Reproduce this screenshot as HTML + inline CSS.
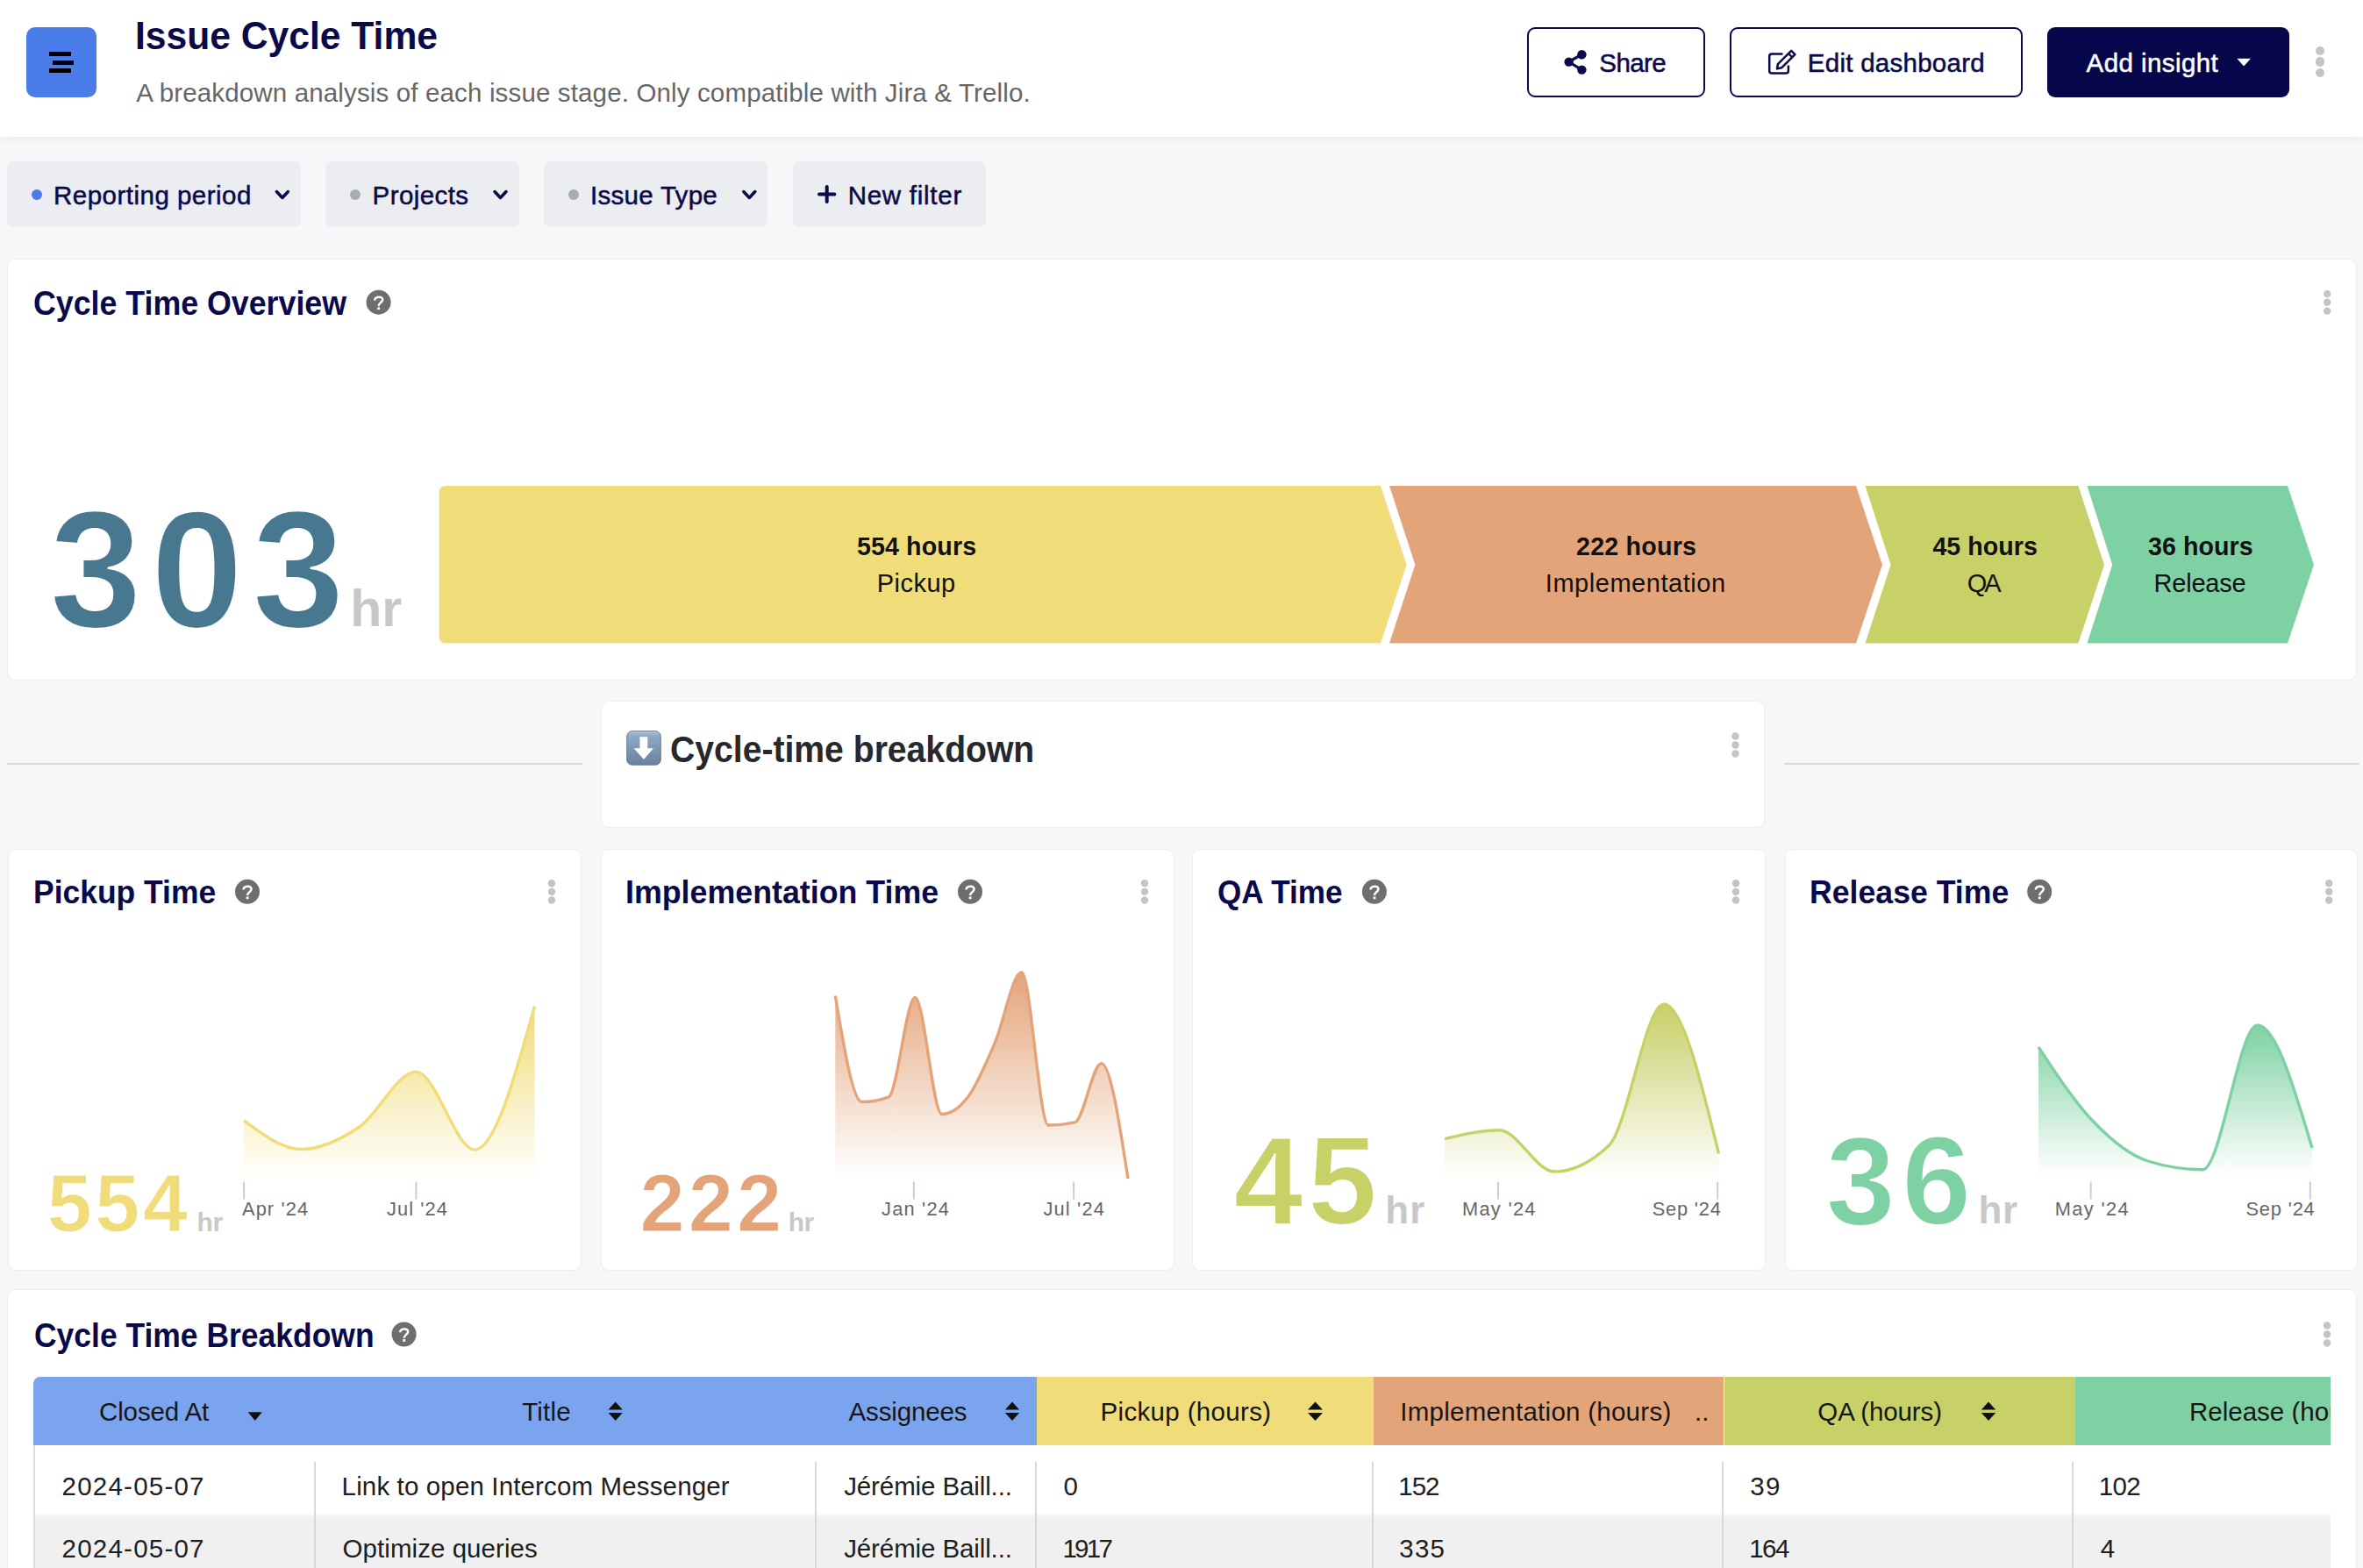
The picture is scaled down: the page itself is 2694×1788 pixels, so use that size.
<!DOCTYPE html>
<html><head><meta charset="utf-8"><title>Issue Cycle Time</title>
<style>
html,body{margin:0;padding:0}
body{width:2694px;height:1788px;overflow:hidden;background:#f6f7f9;position:relative;font-family:"Liberation Sans",sans-serif}
.a{position:absolute;box-sizing:border-box}
.t{position:absolute;white-space:nowrap;line-height:1}
.card{position:absolute;background:#fff;border-radius:8px;box-shadow:0 0 0 1px #eceef0,0 1px 3px rgba(0,0,0,.03)}
.dot{position:absolute;border-radius:50%;background:#c4c4c4}
svg.ov{position:absolute;left:0;top:0}
</style></head><body>
<!-- header -->
<div class="a" style="left:0;top:0;width:2694px;height:156px;background:#fff;box-shadow:0 2px 10px rgba(0,0,0,.06)"></div>
<div class="a" style="left:30px;top:31px;width:80px;height:80px;background:#4a7de9;border-radius:10px"></div>
<div class="a" style="left:56px;top:59px;width:25px;height:5px;background:#000"></div>
<div class="a" style="left:60px;top:68.5px;width:24px;height:5px;background:#000"></div>
<div class="a" style="left:56px;top:78px;width:25px;height:5px;background:#000"></div>
<div class="a" style="left:1741px;top:31px;width:203px;height:80px;border:2.2px solid #0a0a4a;border-radius:9px;background:#fff"></div>
<div class="a" style="left:1972px;top:31px;width:334px;height:80px;border:2.2px solid #0a0a4a;border-radius:9px;background:#fff"></div>
<div class="a" style="left:2334px;top:31px;width:276px;height:80px;border-radius:9px;background:#06064a"></div>
<div class="dot" style="left:2640px;top:52.5px;width:10.4px;height:10.4px"></div>
<div class="dot" style="left:2640px;top:65.4px;width:10.4px;height:10.4px"></div>
<div class="dot" style="left:2640px;top:78.1px;width:10.4px;height:10.4px"></div>
<!-- filters -->
<div class="a" style="left:8.4px;top:184px;width:334.4px;height:75.4px;background:#ecedf0;border-radius:8px"></div>
<div class="a" style="left:371.3px;top:184px;width:220.4px;height:75.4px;background:#ecedf0;border-radius:8px"></div>
<div class="a" style="left:620.3px;top:184px;width:255.2px;height:75.4px;background:#ecedf0;border-radius:8px"></div>
<div class="a" style="left:904.2px;top:184px;width:220.2px;height:75.4px;background:#ecedf0;border-radius:8px"></div>
<div class="dot" style="left:35.9px;top:216px;width:12px;height:12px;background:#4a7de9"></div>
<div class="dot" style="left:399px;top:216px;width:12px;height:12px;background:#a9acb6"></div>
<div class="dot" style="left:647.8px;top:216px;width:12px;height:12px;background:#a9acb6"></div>
<!-- cards -->
<div class="card" style="left:9.3px;top:296px;width:2676.7px;height:479px"></div>
<div class="a" style="left:7.6px;top:870px;width:656.8px;height:2px;background:#d8d9db"></div>
<div class="a" style="left:2034px;top:870px;width:655.6px;height:2px;background:#d8d9db"></div>
<div class="card" style="left:685.6px;top:800px;width:1325.4px;height:143px"></div>
<div class="card" style="left:10px;top:968.6px;width:652px;height:479.4px"></div>
<div class="card" style="left:686px;top:968.6px;width:652px;height:479.4px"></div>
<div class="card" style="left:1360px;top:968.6px;width:652px;height:479.4px"></div>
<div class="card" style="left:2036px;top:968.6px;width:651px;height:479.4px"></div>
<div class="card" style="left:9.1px;top:1471px;width:2676.5px;height:400px"></div>
<!-- table -->
<div class="a" style="left:38.1px;top:1570px;width:1144px;height:78px;background:#7ba4ee;border-top-left-radius:8px"></div>
<div class="a" style="left:1182px;top:1570px;width:384.2px;height:78px;background:#f0dc78"></div>
<div class="a" style="left:1566.2px;top:1570px;width:399.3px;height:78px;background:#e4a47a"></div>
<div class="a" style="left:1965.5px;top:1570px;width:400.5px;height:78px;background:#c8d068"></div>
<div class="a" style="left:2366px;top:1570px;width:291.4px;height:78px;background:#7ed1a3"></div>
<div class="a" style="left:38.1px;top:1725.5px;width:2619.3px;height:63px;background:linear-gradient(#fbfbfb,#f0f0f0 6px)"></div>
<div class="a" style="left:38.1px;top:1648px;width:2px;height:140px;background:#dcdcdc"></div>
<div class="a" style="left:357.6px;top:1666.6px;width:2px;height:122px;background:#d9d9d9"></div>
<div class="a" style="left:928.7px;top:1666.6px;width:2px;height:122px;background:#d9d9d9"></div>
<div class="a" style="left:1179.8px;top:1666.6px;width:2px;height:122px;background:#d9d9d9"></div>
<div class="a" style="left:1564px;top:1666.6px;width:2px;height:122px;background:#d9d9d9"></div>
<div class="a" style="left:1963.2px;top:1666.6px;width:2px;height:122px;background:#d9d9d9"></div>
<div class="a" style="left:2362.4px;top:1666.6px;width:2px;height:122px;background:#d9d9d9"></div>

<svg class="ov" width="2694" height="1788" viewBox="0 0 2694 1788">
<defs>
<linearGradient id="g0" x1="0" y1="1147.2" x2="0" y2="1345" gradientUnits="userSpaceOnUse"><stop offset="0" stop-color="#f0dc78" stop-opacity="1.0"/><stop offset="1" stop-color="#f0dc78" stop-opacity="0"/></linearGradient>
<linearGradient id="g1" x1="0" y1="1108.8" x2="0" y2="1340" gradientUnits="userSpaceOnUse"><stop offset="0" stop-color="#e4a47a" stop-opacity="1.0"/><stop offset="1" stop-color="#e4a47a" stop-opacity="0"/></linearGradient>
<linearGradient id="g2" x1="0" y1="1145.0" x2="0" y2="1345" gradientUnits="userSpaceOnUse"><stop offset="0" stop-color="#c8d068" stop-opacity="1.0"/><stop offset="1" stop-color="#c8d068" stop-opacity="0"/></linearGradient>
<linearGradient id="g3" x1="0" y1="1169.0" x2="0" y2="1340" gradientUnits="userSpaceOnUse"><stop offset="0" stop-color="#7ed1a3" stop-opacity="1.0"/><stop offset="1" stop-color="#7ed1a3" stop-opacity="0"/></linearGradient>
</defs>
<!-- share icon -->
<g fill="#0a0a4a" stroke="#0a0a4a">
<line x1="1803" y1="62.3" x2="1788.5" y2="70.5" stroke-width="3.2"/>
<line x1="1803" y1="79.4" x2="1788.5" y2="70.5" stroke-width="3.2"/>
<circle cx="1803.4" cy="62.3" r="5.2" stroke="none"/>
<circle cx="1788.6" cy="70.6" r="5.2" stroke="none"/>
<circle cx="1803.4" cy="79.6" r="5.2" stroke="none"/>
</g>
<!-- edit icon -->
<g fill="none" stroke="#0a0a4a" stroke-width="2.5" stroke-linejoin="round">
<path d="M2032.5,61.5 H2020 Q2017.2,61.5 2017.2,64.3 V80.8 Q2017.2,83.6 2020,83.6 H2036.1 Q2038.9,83.6 2038.9,80.8 V74.5"/>
<path d="M2026,78.4 L2026.9,73.1 L2042.2,57.9 L2046.4,62.1 L2031.1,77.3 Z"/>
<path d="M2039,61.1 L2043.2,65.3" stroke-width="2.3"/>
</g>
<!-- caret add -->
<path d="M2550.3,66.7 H2566 L2558.15,75.4 Z" fill="#fff"/>
<!-- filter chevrons -->
<g fill="none" stroke="#0a0a4a" stroke-width="3.6" stroke-linecap="round" stroke-linejoin="round">
<path d="M315.4,218.6 L321.9,225.4 L328.4,218.6"/>
<path d="M564,218.6 L570.5,225.4 L577,218.6"/>
<path d="M847.8,218.6 L854.3,225.4 L860.8,218.6"/>
<path d="M942.7,213 V230 M934,221.5 H951.4" stroke-width="4"/>
</g>
<!-- overview bars -->
<path d="M508.6,554 H1574 L1603.6,644 L1574,733.6 H508.6 Q500.6,733.6 500.6,725.6 V562 Q500.6,554 508.6,554 Z" fill="#f0dc78"/>
<path d="M1584,554 H2116 L2146,644 L2116,733.6 H1584 L1613.4,644 Z" fill="#e4a47a"/>
<path d="M2126.5,554 H2369.4 L2399,644 L2369.4,733.6 H2126.5 L2155.6,644 Z" fill="#c8d068"/>
<path d="M2379.5,554 H2608 L2638,644 L2608,733.6 H2379.5 L2408.2,644 Z" fill="#7ed1a3"/>
<!-- help icons -->
<g>
<circle cx="431.6" cy="344.7" r="14" fill="#6e6e6e"/>
<circle cx="282" cy="1016.8" r="14" fill="#6e6e6e"/>
<circle cx="1106" cy="1016.8" r="14" fill="#6e6e6e"/>
<circle cx="1566.9" cy="1016.8" r="14" fill="#6e6e6e"/>
<circle cx="2325.2" cy="1016.8" r="14" fill="#6e6e6e"/>
<circle cx="460.6" cy="1521.5" r="14" fill="#6e6e6e"/>
</g>
<g fill="none" stroke="#fff" stroke-width="2.5">
<path d="M427.2,342.5 C427.2,338.1 436.2,337.1 436.2,341.7 C436.2,344.9 431.7,345.3 431.7,348.9"/><rect x="430.3" y="350.3" width="2.8" height="2.8"  stroke="none" fill="#fff"/>
<path d="M277.6,1014.6 C277.6,1010.2 286.6,1009.2 286.6,1013.8 C286.6,1017.0 282.1,1017.4 282.1,1021.0"/><rect x="280.7" y="1022.4" width="2.8" height="2.8"  stroke="none" fill="#fff"/>
<path d="M1101.6,1014.6 C1101.6,1010.2 1110.6,1009.2 1110.6,1013.8 C1110.6,1017.0 1106.1,1017.4 1106.1,1021.0"/><rect x="1104.7" y="1022.4" width="2.8" height="2.8"  stroke="none" fill="#fff"/>
<path d="M1562.5,1014.6 C1562.5,1010.2 1571.5,1009.2 1571.5,1013.8 C1571.5,1017.0 1567.0,1017.4 1567.0,1021.0"/><rect x="1565.6" y="1022.4" width="2.8" height="2.8"  stroke="none" fill="#fff"/>
<path d="M2320.8,1014.6 C2320.8,1010.2 2329.8,1009.2 2329.8,1013.8 C2329.8,1017.0 2325.3,1017.4 2325.3,1021.0"/><rect x="2323.9" y="1022.4" width="2.8" height="2.8"  stroke="none" fill="#fff"/>
<path d="M456.2,1519.3 C456.2,1514.9 465.2,1513.9 465.2,1518.5 C465.2,1521.7 460.7,1522.1 460.7,1525.7"/><rect x="459.3" y="1527.1" width="2.8" height="2.8"  stroke="none" fill="#fff"/>
</g>
<!-- kebabs -->
<g fill="#c4c4c4">
<circle cx="2653.2" cy="335.1" r="4.2"/><circle cx="2653.2" cy="344.8" r="4.2"/><circle cx="2653.2" cy="354.6" r="4.2"/>
<circle cx="1978.5" cy="839.5" r="4.2"/><circle cx="1978.5" cy="849.5" r="4.2"/><circle cx="1978.5" cy="859.5" r="4.2"/>
<circle cx="629" cy="1007.3" r="4.2"/><circle cx="629" cy="1016.9" r="4.2"/><circle cx="629" cy="1026.5" r="4.2"/>
<circle cx="1305" cy="1007.3" r="4.2"/><circle cx="1305" cy="1016.9" r="4.2"/><circle cx="1305" cy="1026.5" r="4.2"/>
<circle cx="1979" cy="1007.3" r="4.2"/><circle cx="1979" cy="1016.9" r="4.2"/><circle cx="1979" cy="1026.5" r="4.2"/>
<circle cx="2655.2" cy="1007.3" r="4.2"/><circle cx="2655.2" cy="1016.9" r="4.2"/><circle cx="2655.2" cy="1026.5" r="4.2"/>
<circle cx="2653" cy="1511.5" r="4.2"/><circle cx="2653" cy="1521.5" r="4.2"/><circle cx="2653" cy="1531.5" r="4.2"/>
</g>
<!-- emoji -->
<linearGradient id="emg" x1="0" y1="833" x2="0" y2="872.7" gradientUnits="userSpaceOnUse"><stop offset="0" stop-color="#b3c8de"/><stop offset="0.15" stop-color="#8fa9c6"/><stop offset="1" stop-color="#66809e"/></linearGradient>
<rect x="714.7" y="833.7" width="38.6" height="38.5" rx="6" fill="url(#emg)" stroke="#6b7a8c" stroke-width="1"/>
<path d="M729.5,840.3 H738.3 V853.2 H745 L733.9,866 L722.7,853.2 H729.5 Z" fill="#fff"/>
<!-- sort icons -->
<g fill="#111">
<path d="M282.7,1610.3 H298.8 L290.75,1620.1 Z"/>
<path d="M693.5,1607.5 H709.8 L701.65,1598.4 Z M693.5,1611 H709.8 L701.65,1620.1 Z"/>
<path d="M1145.9,1607.5 H1162.1 L1154,1598.4 Z M1145.9,1611 H1162.1 L1154,1620.1 Z"/>
<path d="M1491,1607.5 H1508 L1499.5,1598.4 Z M1491,1611 H1508 L1499.5,1620.1 Z"/>
<path d="M2258.9,1607.5 H2275.2 L2267.05,1598.4 Z M2258.9,1611 H2275.2 L2267.05,1620.1 Z"/>
</g>
<path d="M278.10,1277.70 C299.90,1294.10 321.70,1310.50 343.50,1310.50 C365.57,1310.50 387.63,1300.05 409.70,1285.00 C431.27,1270.29 452.83,1222.10 474.40,1222.10 C496.70,1222.10 519.00,1311.00 541.30,1311.00 C564.03,1311.00 586.77,1229.10 609.50,1147.20 L609.5,1345 L278.1,1345 Z" fill="url(#g0)"/>
<path d="M278.10,1277.70 C299.90,1294.10 321.70,1310.50 343.50,1310.50 C365.57,1310.50 387.63,1300.05 409.70,1285.00 C431.27,1270.29 452.83,1222.10 474.40,1222.10 C496.70,1222.10 519.00,1311.00 541.30,1311.00 C564.03,1311.00 586.77,1229.10 609.50,1147.20" fill="none" stroke="#f0dc78" stroke-width="3.4" stroke-linecap="butt" stroke-linejoin="round"/>
<rect x="277.1" y="1347.5" width="2" height="20" fill="#c9cde0"/>
<rect x="473.4" y="1347.5" width="2" height="20" fill="#c9cde0"/>
<path d="M952.30,1135.50 C962.40,1196.00 972.50,1256.50 982.60,1256.50 C992.73,1256.50 1002.87,1254.70 1013.00,1251.10 C1023.10,1247.51 1033.20,1137.40 1043.30,1137.40 C1053.43,1137.40 1063.57,1270.50 1073.70,1270.50 C1083.80,1270.50 1093.90,1263.77 1104.00,1250.30 C1114.10,1236.83 1124.20,1212.53 1134.30,1189.00 C1144.43,1165.39 1154.57,1108.80 1164.70,1108.80 C1174.80,1108.80 1184.90,1283.00 1195.00,1283.00 C1205.13,1283.00 1215.27,1281.93 1225.40,1279.80 C1235.50,1277.67 1245.60,1212.60 1255.70,1212.60 C1265.80,1212.60 1275.90,1278.30 1286.00,1344.00 L1286.0,1340 L952.3,1340 Z" fill="url(#g1)"/>
<path d="M952.30,1135.50 C962.40,1196.00 972.50,1256.50 982.60,1256.50 C992.73,1256.50 1002.87,1254.70 1013.00,1251.10 C1023.10,1247.51 1033.20,1137.40 1043.30,1137.40 C1053.43,1137.40 1063.57,1270.50 1073.70,1270.50 C1083.80,1270.50 1093.90,1263.77 1104.00,1250.30 C1114.10,1236.83 1124.20,1212.53 1134.30,1189.00 C1144.43,1165.39 1154.57,1108.80 1164.70,1108.80 C1174.80,1108.80 1184.90,1283.00 1195.00,1283.00 C1205.13,1283.00 1215.27,1281.93 1225.40,1279.80 C1235.50,1277.67 1245.60,1212.60 1255.70,1212.60 C1265.80,1212.60 1275.90,1278.30 1286.00,1344.00" fill="none" stroke="#e4a47a" stroke-width="3.4" stroke-linecap="butt" stroke-linejoin="round"/>
<rect x="1040.8" y="1347.5" width="2" height="20" fill="#c9cde0"/>
<rect x="1223.1" y="1347.5" width="2" height="20" fill="#c9cde0"/>
<path d="M1647.00,1298.60 C1667.83,1293.70 1688.67,1288.80 1709.50,1288.80 C1730.33,1288.80 1751.17,1336.00 1772.00,1336.00 C1792.83,1336.00 1813.67,1326.00 1834.50,1306.00 C1855.33,1286.00 1876.17,1145.00 1897.00,1145.00 C1917.83,1145.00 1938.67,1230.25 1959.50,1315.50 L1959.5,1345 L1647.0,1345 Z" fill="url(#g2)"/>
<path d="M1647.00,1298.60 C1667.83,1293.70 1688.67,1288.80 1709.50,1288.80 C1730.33,1288.80 1751.17,1336.00 1772.00,1336.00 C1792.83,1336.00 1813.67,1326.00 1834.50,1306.00 C1855.33,1286.00 1876.17,1145.00 1897.00,1145.00 C1917.83,1145.00 1938.67,1230.25 1959.50,1315.50" fill="none" stroke="#c8d068" stroke-width="3.4" stroke-linecap="butt" stroke-linejoin="round"/>
<rect x="1707" y="1347.5" width="2" height="20" fill="#c9cde0"/>
<rect x="1957.2" y="1347.5" width="2" height="20" fill="#c9cde0"/>
<path d="M2324.00,1193.90 C2344.80,1225.51 2365.60,1257.12 2386.40,1278.80 C2407.20,1300.48 2428.00,1317.53 2448.80,1324.00 C2469.60,1330.47 2490.40,1333.70 2511.20,1333.70 C2532.00,1333.70 2552.80,1169.00 2573.60,1169.00 C2594.40,1169.00 2615.20,1239.05 2636.00,1309.10 L2636.0,1340 L2324.0,1340 Z" fill="url(#g3)"/>
<path d="M2324.00,1193.90 C2344.80,1225.51 2365.60,1257.12 2386.40,1278.80 C2407.20,1300.48 2428.00,1317.53 2448.80,1324.00 C2469.60,1330.47 2490.40,1333.70 2511.20,1333.70 C2532.00,1333.70 2552.80,1169.00 2573.60,1169.00 C2594.40,1169.00 2615.20,1239.05 2636.00,1309.10" fill="none" stroke="#7ed1a3" stroke-width="3.4" stroke-linecap="butt" stroke-linejoin="round"/>
<rect x="2382.7" y="1347.5" width="2" height="20" fill="#c9cde0"/>
<rect x="2632.8" y="1347.5" width="2" height="20" fill="#c9cde0"/>
</svg>
<div class="t" id="h_title" style="left:154.18px;top:18.82px;font-size:44.5px;color:#0a0a4a;font-weight:bold;transform:scaleX(0.9576);transform-origin:0 0;">Issue Cycle Time</div>
<div class="t" id="h_sub" style="left:155.20px;top:90.52px;font-size:29.5px;color:#666;letter-spacing:0.145px;">A breakdown analysis of each issue stage. Only compatible with Jira &amp; Trello.</div>
<div class="t" id="b_share" style="left:1823.30px;top:56.52px;font-size:29.5px;color:#0a0a4a;letter-spacing:-0.578px;-webkit-text-stroke:0.5px currentColor;">Share</div>
<div class="t" id="b_edit" style="left:2060.80px;top:56.52px;font-size:29.5px;color:#0a0a4a;letter-spacing:0.266px;-webkit-text-stroke:0.5px currentColor;">Edit dashboard</div>
<div class="t" id="b_add" style="left:2378.60px;top:56.52px;font-size:29.5px;color:#fff;letter-spacing:0.424px;-webkit-text-stroke:0.5px currentColor;">Add insight</div>
<div class="t" id="f1" style="left:61.00px;top:207.72px;font-size:29.5px;color:#0a0a4a;letter-spacing:0.486px;-webkit-text-stroke:0.5px currentColor;">Reporting period</div>
<div class="t" id="f2" style="left:424.60px;top:207.72px;font-size:29.5px;color:#0a0a4a;letter-spacing:0.412px;-webkit-text-stroke:0.5px currentColor;">Projects</div>
<div class="t" id="f3" style="left:672.90px;top:207.72px;font-size:29.5px;color:#0a0a4a;letter-spacing:0.305px;-webkit-text-stroke:0.5px currentColor;">Issue Type</div>
<div class="t" id="f4" style="left:966.70px;top:207.72px;font-size:29.5px;color:#0a0a4a;letter-spacing:0.731px;-webkit-text-stroke:0.5px currentColor;">New filter</div>
<div class="t" id="o_title" style="left:38.08px;top:326.18px;font-size:39px;color:#0a0a4a;font-weight:bold;transform:scaleX(0.9166);transform-origin:0 0;">Cycle Time Overview</div>
<div class="t" id="o_num" style="left:56.50px;top:555.07px;font-size:189px;color:#477890;font-weight:bold;letter-spacing:10.337px;-webkit-text-stroke:2.2px #fff;">303</div>
<div class="t" id="o_hr" style="left:399.30px;top:665.14px;font-size:59px;color:#c8c8c8;font-weight:bold;letter-spacing:-0.040px;">hr</div>
<div class="t" id="bar1a" style="left:976.90px;top:609.28px;font-size:28.6px;color:#111;font-weight:bold;letter-spacing:0.140px;">554 hours</div>
<div class="t" id="bar1b" style="left:999.70px;top:650.95px;font-size:29px;color:#111;letter-spacing:0.477px;">Pickup</div>
<div class="t" id="bar2a" style="left:1797.00px;top:609.28px;font-size:28.6px;color:#111;font-weight:bold;letter-spacing:0.228px;">222 hours</div>
<div class="t" id="bar2b" style="left:1761.80px;top:650.95px;font-size:29px;color:#111;letter-spacing:0.535px;">Implementation</div>
<div class="t" id="bar3a" style="left:2203.40px;top:609.28px;font-size:28.6px;color:#111;font-weight:bold;letter-spacing:0.046px;">45 hours</div>
<div class="t" id="bar3b" style="left:2242.80px;top:650.95px;font-size:29px;color:#111;letter-spacing:-3.157px;">QA</div>
<div class="t" id="bar4a" style="left:2449.00px;top:609.28px;font-size:28.6px;color:#111;font-weight:bold;letter-spacing:0.061px;">36 hours</div>
<div class="t" id="bar4b" style="left:2455.50px;top:650.95px;font-size:29px;color:#111;letter-spacing:-0.195px;">Release</div>
<div class="t" id="s_title" style="left:763.58px;top:833.33px;font-size:42.6px;color:#26282c;font-weight:bold;transform:scaleX(0.9185);transform-origin:0 0;">Cycle-time breakdown</div>
<div class="t" id="c1_title" style="left:37.98px;top:999.37px;font-size:37px;color:#0a0a4a;font-weight:bold;transform:scaleX(0.9580);transform-origin:0 0;">Pickup Time</div>
<div class="t" id="c2_title" style="left:712.97px;top:999.37px;font-size:37px;color:#0a0a4a;font-weight:bold;transform:scaleX(0.9670);transform-origin:0 0;">Implementation Time</div>
<div class="t" id="c3_title" style="left:1387.95px;top:999.37px;font-size:37px;color:#0a0a4a;font-weight:bold;transform:scaleX(0.9494);transform-origin:0 0;">QA Time</div>
<div class="t" id="c4_title" style="left:2062.67px;top:999.37px;font-size:37px;color:#0a0a4a;font-weight:bold;transform:scaleX(0.9637);transform-origin:0 0;">Release Time</div>
<div class="t" id="c1_num" style="left:53.80px;top:1326.10px;font-size:92px;color:#f0dc78;font-weight:bold;letter-spacing:3.284px;-webkit-text-stroke:1.2px #fff;">554</div>
<div class="t" id="c1_hr" style="left:224.50px;top:1378.50px;font-size:30px;color:#c8c8c8;font-weight:bold;letter-spacing:-0.325px;">hr</div>
<div class="t" id="c2_num" style="left:729.40px;top:1326.10px;font-size:92px;color:#e4a47a;font-weight:bold;letter-spacing:4.134px;-webkit-text-stroke:1.2px #fff;">222</div>
<div class="t" id="c2_hr" style="left:898.80px;top:1378.50px;font-size:30px;color:#c8c8c8;font-weight:bold;letter-spacing:-0.525px;">hr</div>
<div class="t" id="c3_num" style="left:1406.40px;top:1275.87px;font-size:142px;color:#c8d068;font-weight:bold;letter-spacing:5.526px;-webkit-text-stroke:1.8px #fff;">45</div>
<div class="t" id="c3_hr" style="left:1579.20px;top:1357.65px;font-size:44px;color:#c8c8c8;font-weight:bold;letter-spacing:1.223px;">hr</div>
<div class="t" id="c4_num" style="left:2081.70px;top:1275.77px;font-size:142px;color:#7ed1a3;font-weight:bold;letter-spacing:7.626px;-webkit-text-stroke:1.8px #fff;">36</div>
<div class="t" id="c4_hr" style="left:2255.50px;top:1357.65px;font-size:44px;color:#c8c8c8;font-weight:bold;letter-spacing:0.623px;">hr</div>
<div class="t" id="c1_l1" style="left:276.00px;top:1367.84px;font-size:21.8px;color:#666;letter-spacing:1.107px;">Apr &#x27;24</div>
<div class="t" id="c1_l2" style="left:441.10px;top:1367.84px;font-size:21.8px;color:#666;letter-spacing:1.066px;">Jul &#x27;24</div>
<div class="t" id="c2_l1" style="left:1005.10px;top:1367.84px;font-size:21.8px;color:#666;letter-spacing:1.186px;">Jan &#x27;24</div>
<div class="t" id="c2_l2" style="left:1189.50px;top:1367.84px;font-size:21.8px;color:#666;letter-spacing:1.166px;">Jul &#x27;24</div>
<div class="t" id="c3_l1" style="left:1667.00px;top:1367.84px;font-size:21.8px;color:#666;letter-spacing:1.297px;">May &#x27;24</div>
<div class="t" id="c3_l2" style="left:1883.70px;top:1367.84px;font-size:21.8px;color:#666;letter-spacing:0.830px;">Sep &#x27;24</div>
<div class="t" id="c4_l1" style="left:2342.70px;top:1367.84px;font-size:21.8px;color:#666;letter-spacing:1.397px;">May &#x27;24</div>
<div class="t" id="c4_l2" style="left:2560.50px;top:1367.84px;font-size:21.8px;color:#666;letter-spacing:0.830px;">Sep &#x27;24</div>
<div class="t" id="tb_title" style="left:38.69px;top:1502.68px;font-size:39px;color:#0a0a4a;font-weight:bold;transform:scaleX(0.9092);transform-origin:0 0;">Cycle Time Breakdown</div>
<div class="t" id="th1" style="left:113.00px;top:1594.82px;font-size:29.5px;color:#161616;letter-spacing:-0.125px;">Closed At</div>
<div class="t" id="th2" style="left:595.20px;top:1594.82px;font-size:29.5px;color:#161616;letter-spacing:0.193px;">Title</div>
<div class="t" id="th3" style="left:967.60px;top:1594.82px;font-size:29.5px;color:#161616;letter-spacing:-0.157px;">Assignees</div>
<div class="t" id="th4" style="left:1254.50px;top:1594.82px;font-size:29.5px;color:#161616;letter-spacing:0.342px;">Pickup (hours)</div>
<div class="t" id="th5" style="left:1596.30px;top:1594.82px;font-size:29.5px;color:#161616;letter-spacing:0.267px;">Implementation (hours)</div>
<div class="t" id="th5b" style="left:1932.00px;top:1594.82px;font-size:29.5px;color:#161616;">..</div>
<div class="t" id="th6" style="left:2072.30px;top:1594.82px;font-size:29.5px;color:#161616;letter-spacing:-0.104px;">QA (hours)</div>
<div class="t" id="th7" style="left:2496.00px;top:1594.82px;font-size:29.5px;color:#161616;width:161.40px;overflow:hidden;">Release (hours)</div>
<div class="t" id="r1c1" style="left:70.60px;top:1680.22px;font-size:29.5px;color:#1e1e1e;letter-spacing:1.223px;">2024-05-07</div>
<div class="t" id="r1c2" style="left:389.60px;top:1680.22px;font-size:29.5px;color:#1e1e1e;letter-spacing:0.140px;">Link to open Intercom Messenger</div>
<div class="t" id="r1c3" style="left:962.20px;top:1680.22px;font-size:29.5px;color:#1e1e1e;letter-spacing:-0.110px;">Jérémie Baill...</div>
<div class="t" id="r1c4" style="left:1212.40px;top:1680.22px;font-size:29.5px;color:#1e1e1e;">0</div>
<div class="t" id="r1c5" style="left:1594.30px;top:1680.22px;font-size:29.5px;color:#1e1e1e;letter-spacing:-1.056px;">152</div>
<div class="t" id="r1c6" style="left:1995.20px;top:1680.22px;font-size:29.5px;color:#1e1e1e;letter-spacing:1.294px;">39</div>
<div class="t" id="r1c7" style="left:2392.80px;top:1680.22px;font-size:29.5px;color:#1e1e1e;letter-spacing:-0.706px;">102</div>
<div class="t" id="r2c1" style="left:70.60px;top:1750.52px;font-size:29.5px;color:#1e1e1e;letter-spacing:1.223px;">2024-05-07</div>
<div class="t" id="r2c2" style="left:390.60px;top:1750.52px;font-size:29.5px;color:#1e1e1e;letter-spacing:0.054px;">Optimize queries</div>
<div class="t" id="r2c3" style="left:962.20px;top:1750.52px;font-size:29.5px;color:#1e1e1e;letter-spacing:-0.110px;">Jérémie Baill...</div>
<div class="t" id="r2c4" style="left:1211.40px;top:1750.52px;font-size:29.5px;color:#1e1e1e;letter-spacing:-2.673px;">1917</div>
<div class="t" id="r2c5" style="left:1595.30px;top:1750.52px;font-size:29.5px;color:#1e1e1e;letter-spacing:1.244px;">335</div>
<div class="t" id="r2c6" style="left:1994.20px;top:1750.52px;font-size:29.5px;color:#1e1e1e;letter-spacing:-1.506px;">164</div>
<div class="t" id="r2c7" style="left:2394.80px;top:1750.52px;font-size:29.5px;color:#1e1e1e;">4</div>
</body></html>
